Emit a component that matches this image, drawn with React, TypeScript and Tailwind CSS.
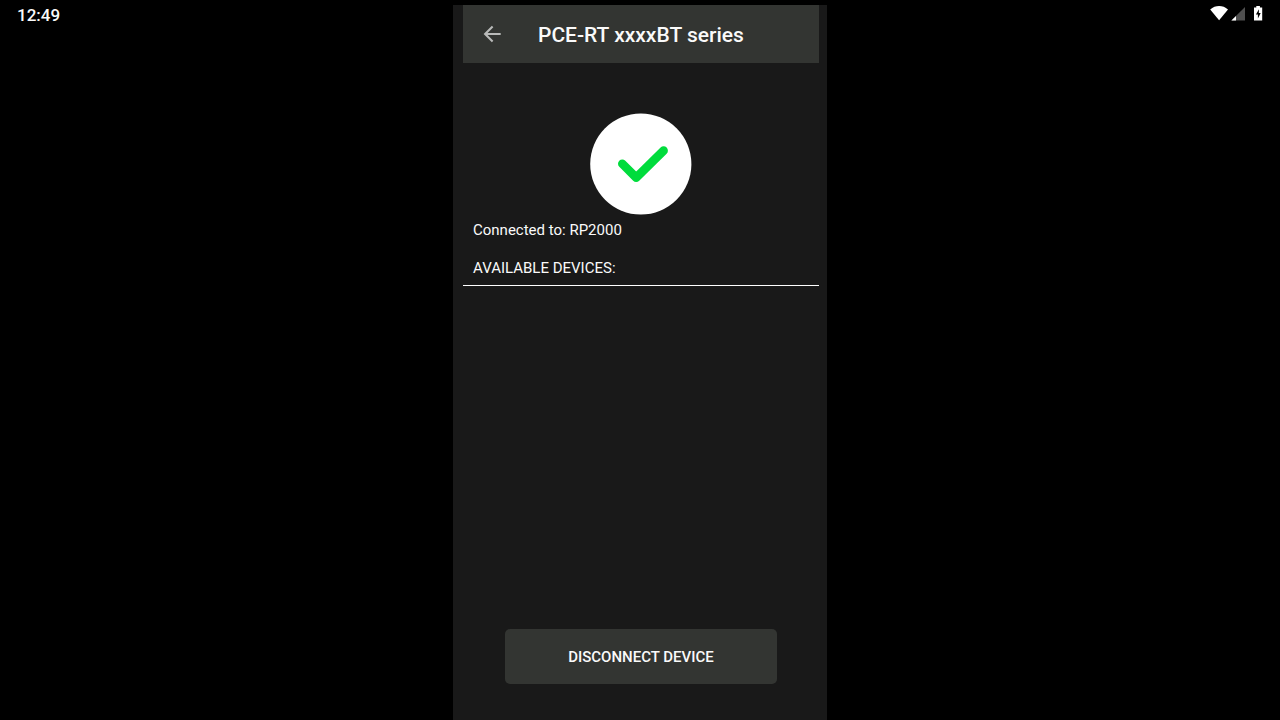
interface DeviceScreenProps {
  title: string;
  connectedTo: string;
}

function ArrowLeft() {
  return (
    <svg viewBox="0 0 18 18" className="w-[18px] h-[18px]" fill="none" stroke="#b9bab9" strokeWidth="2.1">
      <path d="M17.7 9H2.4M9.6 1.5L2.1 9l7.5 7.5" />
    </svg>
  );
}

function StatusIcons() {
  return (
    <svg viewBox="0 0 54 16" className="w-[54px] h-4">
      <path d="M0.2 3.4C5.4-1.1 12.8-1.1 18 3.4L9.1 14.3z" fill="#fff" />
      <path d="M35 1v13.6H21.4z" fill="#4f4f4f" />
      <path d="M26 10v4.6h-4.6z" fill="#fff" />
      <path d="M46.3 0h3.6v1.4h2.3V14.6H44V1.4h2.3z" fill="#fff" />
      <path d="M49 3.2L45.9 8.4h2v4L50.7 7h-1.9z" fill="#000" />
    </svg>
  );
}

function CheckBadge() {
  return (
    <svg viewBox="0 0 102 102" className="w-[102px] h-[102px]" role="img" aria-label="Connected">
      <circle cx="50.8" cy="51" r="50.6" fill="#fff" />
      <path d="M32.3 50.8L46.2 64.6L73.6 37.6" fill="none" stroke="#00dc3c" strokeWidth="8.6" strokeLinecap="round" strokeLinejoin="round" />
    </svg>
  );
}

function DeviceScreen({ title, connectedTo }: DeviceScreenProps) {
  return (
    <main className="flex flex-col mt-[5px] pl-[10px] pr-2 bg-[#191919]">
      <header className="flex items-center h-[58px] bg-[#333532]">
        <button type="button" aria-label="Back" className="ml-5 mr-[37px]">
          <ArrowLeft />
        </button>
        <h1 className="pt-0.5 text-[21px] leading-6 font-medium whitespace-nowrap">{title}</h1>
      </header>

      <div className="flex justify-center pt-[50px]">
        <CheckBadge />
      </div>

      <p className="px-[10px] pt-[3px] text-[15px] leading-6">Connected to: {connectedTo}</p>
      <h2 className="px-[10px] pt-[14px] pb-[5px] text-[15px] leading-6 border-b border-white">AVAILABLE DEVICES:</h2>

      <div className="mt-auto px-[42px] pb-9">
        <button type="button" className="w-full h-[55px] pt-0.5 rounded-[5px] bg-[#333532] text-[15px] font-medium">
          DISCONNECT DEVICE
        </button>
      </div>
    </main>
  );
}

export default function App() {
  return (
    <div className="grid grid-cols-[1fr_374px_1fr] min-h-screen bg-black text-[#fafafa] font-['Roboto',sans-serif]">
      <time className="pl-[17px] pt-[5px] text-[17px] leading-5 font-medium">12:49</time>
      <DeviceScreen title="PCE-RT xxxxBT series" connectedTo="RP2000" />
      <div className="flex justify-end items-start pr-4 pt-[6px]">
        <StatusIcons />
      </div>
    </div>
  );
}
